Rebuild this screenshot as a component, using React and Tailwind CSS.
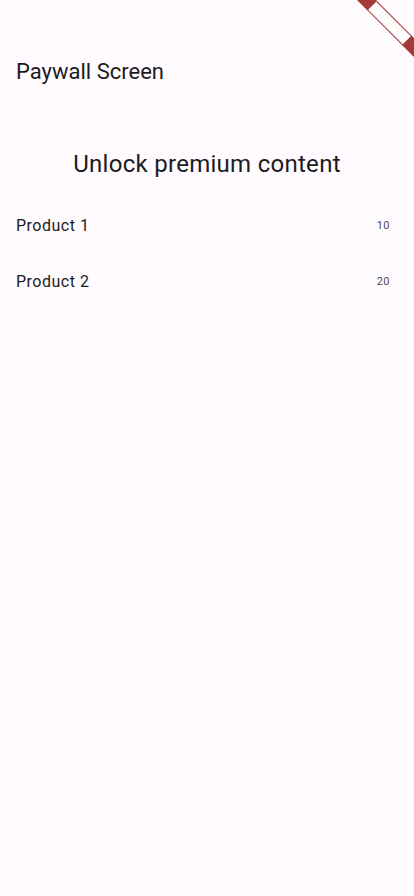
export default function App() {
    const products = [
        { name: "Product 1", price: "10" },
        { name: "Product 2", price: "20" },
    ];

    return (
        <div className="relative min-h-[896px] w-full overflow-hidden bg-[#fffbfe] text-[#1c1b1f]" style={{ fontFamily: "Roboto, 'Noto Sans', sans-serif" }}>
            {/* app bar */}
            <header className="flex h-[56px] items-center px-4 mt-[44px]">
                <h1 className="text-[22px] leading-[28px] font-normal">Paywall Screen</h1>
            </header>

            <div className="pt-[48px]">
                <h2 className="text-center text-[24px] leading-[32px] font-normal tracking-[0.28px]">Unlock premium content</h2>
            </div>

            <ul className="mt-[18px]">
                {products.map((p) => (
                    <li key={p.name} className="flex h-[56px] items-center justify-between pl-4 pr-6">
                        <span className="text-[16px] leading-[24px] tracking-[0.5px]">{p.name}</span>
                        <span className="text-[11px] leading-[16px] tracking-[0.5px] text-[#4a4a4f]">{p.price}</span>
                    </li>
                ))}
            </ul>

            {/* debug banner */}
            <svg className="absolute right-0 top-0" width="60" height="60" viewBox="0 0 60 60">
                <g transform="translate(12.5,0) rotate(45)">
                    <rect x="-20" y="-6.7" width="110" height="13.4" fill="#a23b38" />
                    <rect x="8" y="-5.7" width="49" height="11.4" fill="#ffffff" />
                    <line x1="20" y1="-5" x2="20" y2="5" stroke="#f3dede" strokeWidth="0.6" />
                    <line x1="32" y1="-5" x2="32" y2="5" stroke="#f3dede" strokeWidth="0.6" />
                    <line x1="44" y1="-5" x2="44" y2="5" stroke="#f3dede" strokeWidth="0.6" />
                </g>
            </svg>
        </div>
    );
}
